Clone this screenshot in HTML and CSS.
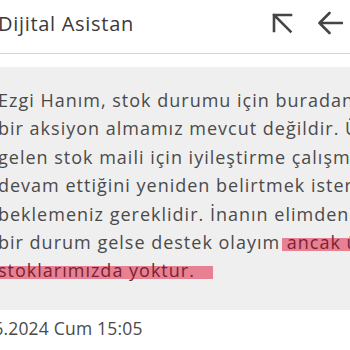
FILE: index.html
```html
<!DOCTYPE html>
<html lang="tr">
<head>
<meta charset="utf-8">
<link rel="stylesheet" href="styles.css">
</head>
<body>
<div class="screen">
  <header class="header">
    <h1 class="title">Dijital Asistan</h1>
    <div class="actions">
      <svg class="icon icon-nw" width="22" height="22" viewBox="0 0 22 22">
        <path d="M3 3 H20 M3 3 V19 M3 3 L19.5 19.5" fill="none" stroke="#454545" stroke-width="2.6" stroke-linecap="square"/>
      </svg>
      <svg class="icon icon-back" width="26" height="24" viewBox="0 0 26 24">
        <path d="M2.5 12 H25 M12.5 2 L2.5 12 L12.5 22" fill="none" stroke="#454545" stroke-width="2.6" stroke-linecap="round" stroke-linejoin="round"/>
      </svg>
    </div>
  </header>
  <div class="bubble">
    <p class="msg">Ezgi Hanım, stok durumu için buradan ekip<br>bir aksiyon almamız mevcut değildir. Ürün<br>gelen stok maili için iyileştirme çalışmaları<br>devam ettiğini yeniden belirtmek isterim,<br>beklemeniz gereklidir. İnanın elimden gelen<br>bir durum gelse destek olayım <span class="mark">ancak ürün</span><br><span class="mark mark-end">stoklarımızda yoktur.</span></p>
  </div>
  <div class="date">06.2024 Cum 15:05</div>
</div>
</body>
</html>
```
FILE: styles.css
```css
html, body {
  margin: 0;
  padding: 0;
  background: #ffffff;
  overflow: hidden;
}
.screen {
  width: 350px;
  height: 350px;
  overflow: hidden;
  font-family: "Open Sans", "DejaVu Sans", sans-serif;
  color: #474747;
}
.header {
  height: 53px;
  border-bottom: 1px solid #d4d4d4;
  display: flex;
  align-items: center;
  justify-content: space-between;
}
.title {
  margin: 0 0 0 -2px;
  font-size: 20px;
  font-weight: 400;
  letter-spacing: 0.7px;
  color: #3a3a3a;
  padding-bottom: 6px;
}
.actions {
  display: flex;
  align-items: center;
  gap: 24px;
  padding-right: 7px;
  padding-bottom: 8px;
}
.icon { display: block; }
.bubble {
  margin-top: 13px;
  margin-left: -2px;
  width: 640px;
  background: #efefef;
  padding: 19px 0 25px 0;
}
.msg {
  margin: 0;
  font-size: 18px;
  line-height: 28.4px;
  letter-spacing: 1px;
  white-space: nowrap;
  color: #4a4a4a;
}
.mark {
  color: #7a2233;
  background: linear-gradient(to bottom, transparent 32%, rgba(229, 92, 115, 0.75) 32%, rgba(229, 92, 115, 0.75) 88%, transparent 88%);
  padding: 0 2px 0 5px;
  margin-left: -4px;
}
.mark-end {
  padding: 0 18px 0 2px;
  margin-left: -2px;
}
.date {
  margin: 6px 0 0 -17px;
  font-size: 17.5px;
  letter-spacing: 0.2px;
  color: #4a4a4a;
}
```
